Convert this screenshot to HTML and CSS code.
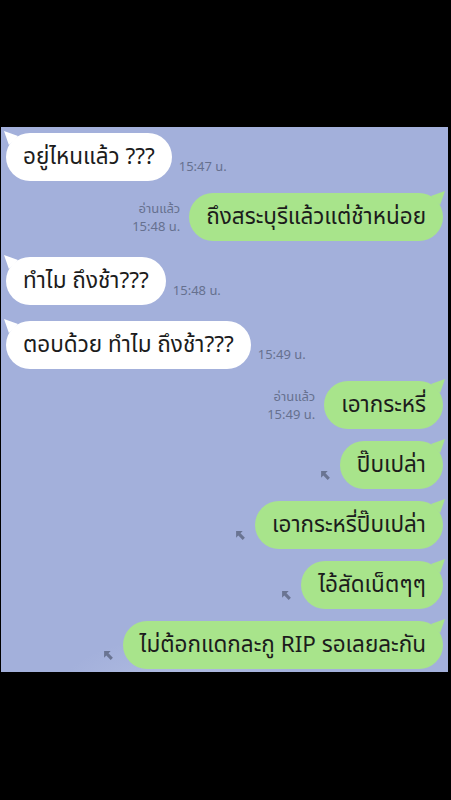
FILE: index.html
```html
<!DOCTYPE html>
<html lang="th">
<head>
  <meta charset="UTF-8">
  <meta name="viewport" content="width=device-width, initial-scale=1.0">
  <title>แชท</title>
  <link rel="stylesheet" href="styles.css">
</head>
<body>
  <div class="chat">
    <div class="row them">
      <div class="bubble">อยู่ไหนแล้ว ???</div>
      <div class="meta">15:47 น.</div>
    </div>
    <div class="row me">
      <div class="meta"><span>อ่านแล้ว</span><span>15:48 น.</span></div>
      <div class="bubble">ถึงสระบุรีแล้วแต่ช้าหน่อย</div>
    </div>
    <div class="row them gap-lg">
      <div class="bubble">ทำไม ถึงช้า???</div>
      <div class="meta">15:48 น.</div>
    </div>
    <div class="row them gap-lg">
      <div class="bubble">ตอบด้วย ทำไม ถึงช้า???</div>
      <div class="meta">15:49 น.</div>
    </div>
    <div class="row me">
      <div class="meta"><span>อ่านแล้ว</span><span>15:49 น.</span></div>
      <div class="bubble">เอากระหรี่</div>
    </div>
    <div class="row me">
      <div class="meta"><svg class="arrow" viewBox="0 0 10 10"><path d="M1 1 L7 1 L5 3 L9 7 L7 9 L3 5 L1 7 Z"/></svg></div>
      <div class="bubble">ปิ๊บเปล่า</div>
    </div>
    <div class="row me">
      <div class="meta"><svg class="arrow" viewBox="0 0 10 10"><path d="M1 1 L7 1 L5 3 L9 7 L7 9 L3 5 L1 7 Z"/></svg></div>
      <div class="bubble">เอากระหรี่ปิ๊บเปล่า</div>
    </div>
    <div class="row me">
      <div class="meta"><svg class="arrow" viewBox="0 0 10 10"><path d="M1 1 L7 1 L5 3 L9 7 L7 9 L3 5 L1 7 Z"/></svg></div>
      <div class="bubble">ไอ้สัดเน็ตๆๆ</div>
    </div>
    <div class="row me">
      <div class="meta"><svg class="arrow" viewBox="0 0 10 10"><path d="M1 1 L7 1 L5 3 L9 7 L7 9 L3 5 L1 7 Z"/></svg></div>
      <div class="bubble">ไม่ต้อกแดกละกู RIP รอเลยละกัน</div>
    </div>
  </div>
</body>
</html>
```

FILE: styles.css
```css
body {
  margin: 0;
  padding: 0;
  height: 800px;
  background: #000;
  font-family: "Noto Sans", "Noto Sans Thai", sans-serif;
  overflow: hidden;
}
.chat {
  margin: 127px 0 0 1px;
  width: 447px;
  height: 545px;
  box-sizing: border-box;
  padding: 6px 5px 0 5px;
  display: flex;
  flex-direction: column;
  gap: 12px;
  background: radial-gradient(ellipse 120px 50px at 180px 560px, rgba(188, 198, 230, 0.6), transparent),
              radial-gradient(ellipse 160px 50px at 90px 600px, rgba(185, 195, 228, 0.4), transparent),
              #a3b0db;
}
.row {
  display: flex;
  align-items: flex-end;
}
.row.gap-lg {
  margin-top: 4px;
}
.row.me {
  justify-content: flex-end;
}
.bubble {
  position: relative;
  height: 48px;
  padding: 0 17px;
  border-radius: 24px;
  display: flex;
  align-items: center;
  font-size: 22.5px;
  color: #1c1c1c;
  white-space: nowrap;
}
.them .bubble {
  background: #fff;
}
.me .bubble {
  background: #a8e48b;
}
/* หางของบับเบิล */
.bubble::before {
  content: "";
  position: absolute;
  top: -2px;
  width: 14px;
  height: 14px;
  background: inherit;
}
.them .bubble::before {
  left: -2px;
  clip-path: polygon(0 0, 100% 35%, 35% 100%);
}
.me .bubble::before {
  right: -2px;
  clip-path: polygon(100% 0, 0 35%, 65% 100%);
}
.meta {
  display: flex;
  flex-direction: column;
  font-size: 13px;
  line-height: 18px;
  color: #66708f;
  padding-bottom: 6px;
}
.them .meta {
  margin-left: 7px;
}
.me .meta {
  margin-right: 9px;
  align-items: flex-end;
  text-align: right;
}
.arrow {
  width: 11px;
  height: 11px;
  margin-bottom: 2px;
  fill: #6a7492;
}
```
